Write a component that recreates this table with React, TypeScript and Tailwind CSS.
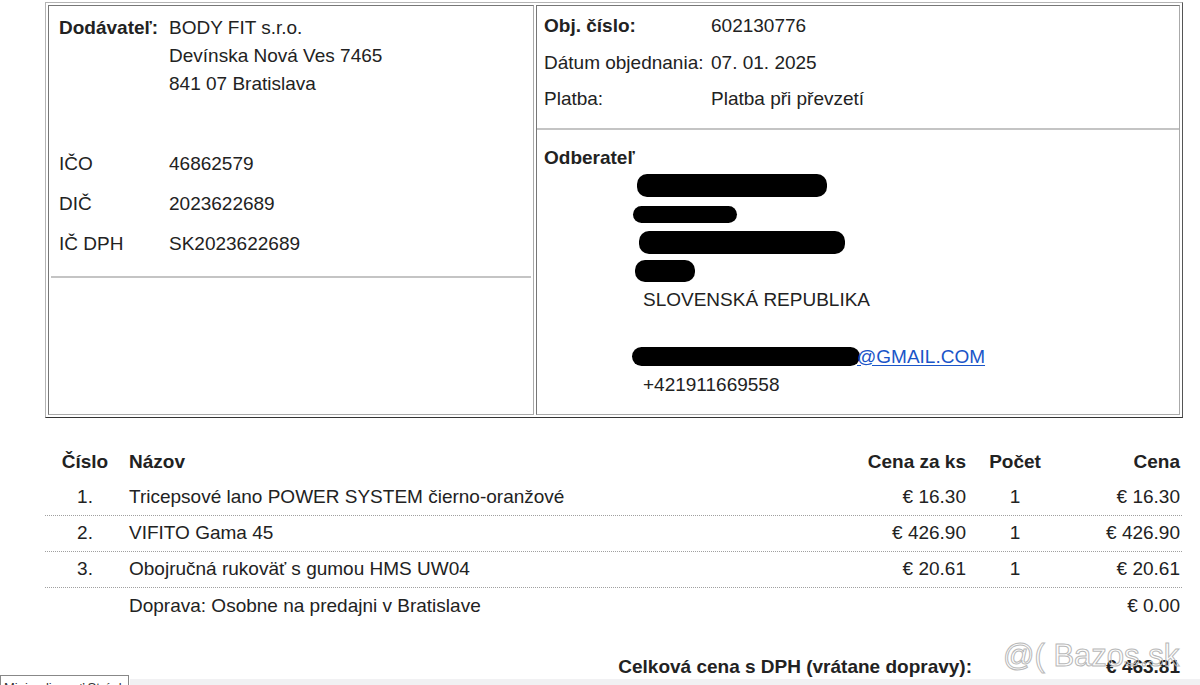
import React from 'react';

const items = [
  { no: '1.', name: 'Tricepsové lano POWER SYSTEM čierno-oranžové', unit: '€ 16.30', qty: '1', total: '€ 16.30' },
  { no: '2.', name: 'VIFITO Gama 45', unit: '€ 426.90', qty: '1', total: '€ 426.90' },
  { no: '3.', name: 'Obojručná rukoväť s gumou HMS UW04', unit: '€ 20.61', qty: '1', total: '€ 20.61' },
];

function Blob({ className }: { className: string }) {
  return <span className={`block bg-black rounded-[10px] ${className}`} />;
}

export default function App() {
  return (
    <div className="relative w-[1200px] h-[685px] overflow-hidden bg-white text-[#222] text-[19px] font-['Liberation_Sans',Arial,sans-serif]">
      {/* Header box: supplier / order */}
      <div className="ml-[45px] mt-[2px] w-[1138px] h-[416px] border border-t-[#b4b4b4] border-l-[#b4b4b4] border-r-[#555] border-b-[#333] p-[2px] flex gap-[2px]">
        {/* Supplier */}
        <div className="w-[486px] border border-t-[#777] border-l-[#777] border-r-[#aaa] border-b-[#aaa]">
          <div className="pt-[8px] pl-[10px] flex leading-[28px]">
            <div className="w-[110px] font-bold">Dodávateľ:</div>
            <div>
              <div>BODY FIT s.r.o.</div>
              <div>Devínska Nová Ves 7465</div>
              <div>841 07 Bratislava</div>
            </div>
          </div>
          <div className="mt-[46px] pl-[10px] leading-[40px]">
            <div className="flex"><div className="w-[110px]">IČO</div><div>46862579</div></div>
            <div className="flex"><div className="w-[110px]">DIČ</div><div>2023622689</div></div>
            <div className="flex"><div className="w-[110px]">IČ DPH</div><div>SK2023622689</div></div>
          </div>
          <div className="mt-[12px] mx-[2px] h-[2px] bg-[#c4c4c4]" />
        </div>

        {/* Order + customer */}
        <div className="flex-1 border border-t-[#777] border-l-[#777] border-r-[#aaa] border-b-[#aaa]">
          <div className="pt-[2px] pl-[7px] leading-[36.5px]">
            <div className="flex"><div className="w-[167px] font-bold">Obj. číslo:</div><div>602130776</div></div>
            <div className="flex"><div className="w-[167px]">Dátum objednania:</div><div>07. 01. 2025</div></div>
            <div className="flex"><div className="w-[167px]">Platba:</div><div>Platba při převzetí</div></div>
          </div>
          <div className="mt-[10px] h-[2px] bg-[#c4c4c4]" />
          <div className="mt-[14px] pl-[7px] leading-[28px] font-bold">Odberateľ</div>
          <div className="pl-[106px] leading-[28.5px]">
            <div className="h-[28.5px] flex items-center"><Blob className="-ml-[6px] w-[190px] h-[23px]" /></div>
            <div className="h-[28.5px] flex items-center"><Blob className="-ml-[10px] w-[104px] h-[17px]" /></div>
            <div className="h-[28.5px] flex items-center"><Blob className="-ml-[4px] w-[206px] h-[23px]" /></div>
            <div className="h-[28.5px] flex items-center"><Blob className="-ml-[8px] w-[60px] h-[22px] rounded-[8px]" /></div>
            <div>SLOVENSKÁ REPUBLIKA</div>
            <div className="h-[28.5px]" />
            <div className="h-[28.5px] flex items-center">
              <span className="text-[#1a55c8] underline underline-offset-2 flex items-center">
                <Blob className="-ml-[11px] w-[228px] h-[19px]" />
                <span className="-ml-[3px]">@GMAIL.COM</span>
              </span>
            </div>
            <div>+421911669558</div>
          </div>
        </div>
      </div>

      {/* Items */}
      <div className="ml-[45px] mt-[27px] w-[1137px]">
        <div className="flex h-[35px] items-center font-bold">
          <div className="w-[80px] text-center">Číslo</div>
          <div className="flex-1 pl-[4px]">Názov</div>
          <div className="w-[150px] text-right pr-[8px]">Cena za ks</div>
          <div className="w-[82px] text-center">Počet</div>
          <div className="w-[126px] text-right pr-[2px]">Cena</div>
        </div>
        {items.map((it) => (
          <div key={it.no} className="flex h-[36px] items-center border-b border-dotted border-[#a0a0a0]">
            <div className="w-[80px] text-center">{it.no}</div>
            <div className="flex-1 pl-[4px]">{it.name}</div>
            <div className="w-[150px] text-right pr-[8px]">{it.unit}</div>
            <div className="w-[82px] text-center">{it.qty}</div>
            <div className="w-[126px] text-right pr-[2px]">{it.total}</div>
          </div>
        ))}
        <div className="flex h-[36px] items-center">
          <div className="w-[80px]" />
          <div className="flex-1 pl-[4px]">Doprava: Osobne na predajni v Bratislave</div>
          <div className="w-[126px] text-right pr-[2px]">€ 0.00</div>
        </div>
        <div className="mt-[25px] flex h-[36px] items-center font-bold">
          <div className="flex-1 text-right pr-[2px]">Celková cena s DPH (vrátane dopravy):</div>
          <div className="w-[208px] text-right pr-[2px]">€ 463.81</div>
        </div>
      </div>

      {/* Watermark */}
      <div className="absolute left-[1003px] top-[637px] whitespace-nowrap text-[31px] leading-[38px] text-transparent [-webkit-text-stroke:1px_#b8b8b8]">
        @( Bazos.sk
      </div>

      {/* Browser status strip */}
      <div className="absolute left-[130px] right-0 top-[679px] h-[6px] bg-[#f1f1f3]" />
      <div className="absolute left-0 top-[675px] w-[129px] h-[22px] bg-white border border-[#888] text-[13px] leading-[16px] pt-[4px] pl-[3px] text-[#333] overflow-hidden whitespace-nowrap">
        Minimalizovať Stránku
      </div>
    </div>
  );
}
